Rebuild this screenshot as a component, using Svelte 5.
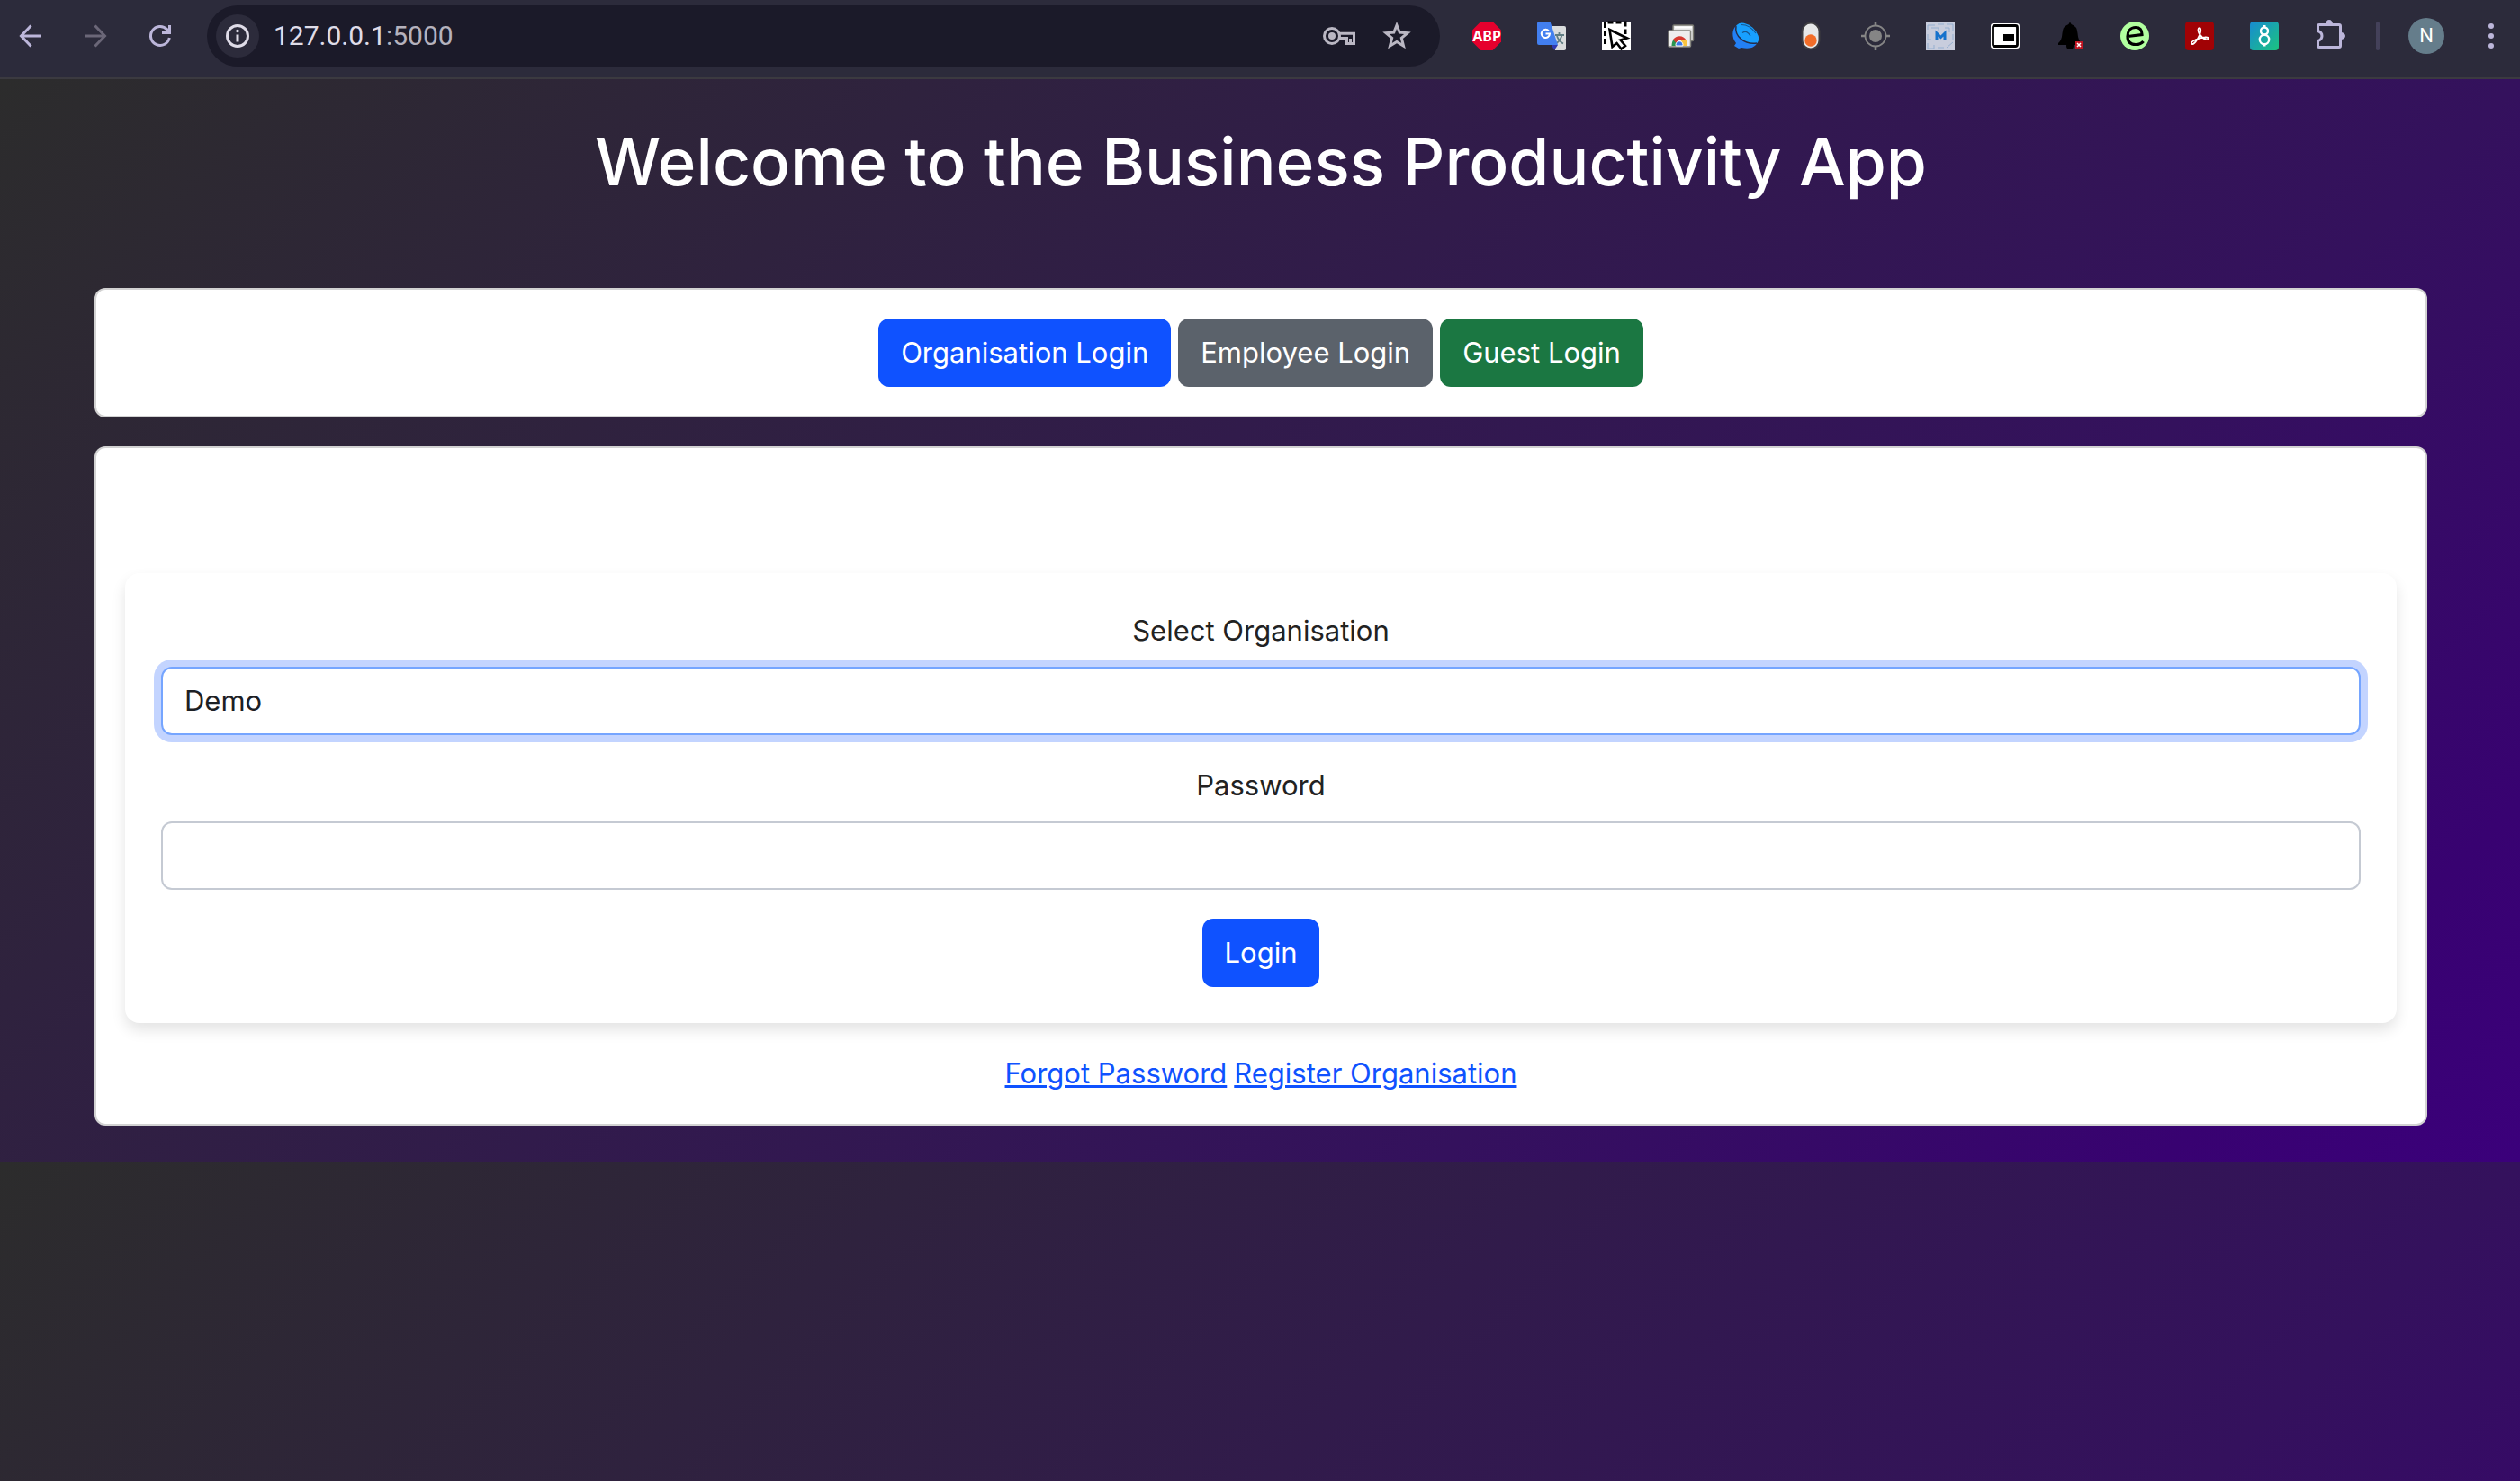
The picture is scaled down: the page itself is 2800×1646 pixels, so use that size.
<script>
  let organisation = $state('Demo');
  let password = $state('');
  const keepPage = (event) => event.preventDefault();
</script>

<header class="toolbar">
  <nav class="history" aria-label="History">
    <button class="tool" aria-label="Back">
      <svg viewBox="0 0 40 40"><path d="M32 20H10M20.500 8.500L9.500 20L20.500 31.500" class="line" /></svg>
    </button>
    <button class="tool faded" aria-label="Forward">
      <svg viewBox="0 0 40 40"><path d="M8 20H30M19.500 8.500L30.500 20L19.500 31.500" class="line" /></svg>
    </button>
    <button class="tool" aria-label="Reload">
      <svg viewBox="0 0 40 40"><path d="M30.300 22A10.500 10.500 0 1 1 27.500 12.600L31 16.500" class="line" /><path d="M30.500 8V16.500H22" class="line" /></svg>
    </button>
  </nav>
  <div class="omnibox">
    <button class="site" aria-label="Site information">
      <svg viewBox="0 0 40 40"><circle cx="20" cy="20" r="11.500" class="line" /><path d="M20 18.500V26.500" class="line" /><circle cx="20" cy="14.500" r="1.800" fill="currentColor" /></svg>
    </button>
    <span class="address">127.0.0.1<span class="port">:5000</span></span>
    <button class="tool pale" aria-label="Passwords">
      <svg viewBox="0 0 40 40"><circle cx="12" cy="20" r="8.500" class="line" /><circle cx="12" cy="20" r="4" fill="currentColor" /><path d="M19 17.300H36.500V28.500H28.500V22.500H20M32.500 23V28" class="line" /></svg>
    </button>
    <button class="tool pale" aria-label="Bookmark this page">
      <svg viewBox="0 0 40 40"><path d="M20 8L23.200 16L32 16.700L25.300 22.300L27.500 31L20 26.400L12.500 31L14.700 22.300L8 16.700L16.800 16Z" class="line" /></svg>
    </button>
  </div>
  <div class="extensions">
    <button class="tool" aria-label="Ad blocker">
      <svg viewBox="0 0 40 40"><path d="M13.400 4H26.600L36 13.400V26.600L26.600 36H13.400L4 26.600V13.400Z" fill="#e6002d" /><text x="20" y="26" class="abp">ABP</text></svg>
    </button>
    <button class="tool" aria-label="Translate">
      <svg viewBox="0 0 40 40"><path d="M20 9H34Q36 9 36 11V34Q36 36 34 36H24Z" fill="#dadcdd" /><path d="M20 30H27L23 36Z" fill="#3038b0" /><path d="M24 19H34M28.500 16V19M31.500 19Q30 25 25.500 28M26 20Q28 26 33 28.500" fill="none" stroke="#607d83" stroke-width="1.800" /><path d="M6 4H18.500L27 30H6Q4 30 4 28V6Q4 4 6 4Z" fill="#427ff0" /><path d="M17 14.500A4.600 4.600 0 1 0 18 17.500H13.500" fill="none" stroke="#fff" stroke-width="2" /></svg>
    </button>
    <button class="tool" aria-label="Area select">
      <svg viewBox="0 0 40 40"><path d="M4 4H36V36H4Z" fill="#fff" /><path d="M7.500 29V5H30V18" fill="none" stroke="#000" stroke-width="3" stroke-dasharray="6 3" /><path d="M12.500 13L32 22.500L24.500 24.500L30 31L25.500 34.500L20.500 28L15.500 32Z" fill="#fff" stroke="#000" stroke-width="2.600" /></svg>
    </button>
    <button class="tool" aria-label="Tabs">
      <svg viewBox="0 0 40 40"><rect x="11" y="8" width="22.500" height="17.500" rx="1" fill="#e6e6e6" stroke="#77776f" stroke-width="1.500" /><path d="M13 10.500H32" stroke="#fff" stroke-width="2" /><rect x="6" y="14" width="24.500" height="18" rx="1" fill="#eee" stroke="#85857f" stroke-width="1.500" /><path d="M9.500 31Q9.500 25 13 23L18 31Z" fill="#2a9450" /><path d="M11 24A8.600 8.600 0 0 1 25.500 24.500H18L14.500 28Z" fill="#d63a30" /><path d="M20 24.500H25.700Q27 27 26.800 31H19Z" fill="#f9c440" /><path d="M14.200 31A4 4 0 1 1 21.800 31Z" fill="#3b78e8" stroke="#fff" /></svg>
    </button>
    <button class="tool" aria-label="Planet">
      <svg viewBox="0 0 40 40"><path d="M10 8C4 12 4 22 9 28L7 31L12 34L15 33C24 35 31 33 33 26Z" fill="#2380f5" /><ellipse cx="21.500" cy="17.500" rx="15" ry="9" fill="#18a0ff" transform="rotate(42 21.500 17.500)" /><path d="M9 9C7 20 18 30 32 28" fill="none" stroke="#252b48" stroke-width="1.500" /><path d="M16 16.500Q21 13 25 20M14 7.500Q24 7 31 17" fill="none" stroke="#17568e" stroke-width="1.200" /></svg>
    </button>
    <button class="tool" aria-label="Toggle">
      <svg viewBox="0 0 40 40"><rect x="10.500" y="5.500" width="19" height="29" rx="9.500" fill="#e7e8e8" stroke="#3d3c40" stroke-width="2" /><circle cx="20" cy="25" r="6.700" fill="#f26d28" /></svg>
    </button>
    <button class="tool" aria-label="Locator">
      <svg viewBox="0 0 40 40"><g fill="none" stroke="#858585" stroke-width="1.800"><circle cx="20" cy="20" r="11.500" /><path d="M20 4V9M20 31V36M4 20H9M31 20H36" stroke-width="2.600" /></g><circle cx="20" cy="20" r="7" fill="#858585" /></svg>
    </button>
    <button class="tool" aria-label="Monitor">
      <svg viewBox="0 0 40 40"><path d="M4 4H36V36H4Z" fill="#c8cddd" /><path d="M6 13V8H14M17 7H24M27 7H34V15M34 18V25M6 18V24H10M6 28V34H13V30M17 33H24M27 33L34 27M10 11H18V14M25 11H30V16" fill="none" stroke="#95afd0" stroke-width="1" /><path d="M16 24.500V17L20.500 21.500L25 17V24.500" fill="none" stroke="#1672cc" stroke-width="3" /></svg>
    </button>
    <button class="tool" aria-label="Picture in picture">
      <svg viewBox="0 0 40 40"><rect x="4" y="6" width="32" height="28" rx="3" fill="#fff" /><rect x="6.500" y="8.500" width="27" height="23" rx="2" fill="#fff" stroke="#000" stroke-width="2.800" /><path d="M18 18H30V26H18Z" fill="#000" /></svg>
    </button>
    <button class="tool" aria-label="Notifications off">
      <svg viewBox="0 0 40 40"><path d="M18.500 7Q20 3 21.500 7Q28 9 28.500 17Q29 25 33 28V30H7V28Q11 25 11.500 17Q12 9 18.500 7Z" fill="#000" /><circle cx="20" cy="31" r="4" fill="#000" /><path d="M26 26H34V34H26Z" fill="#c01522" /><path d="M28 28L32 32M32 28L28 32" stroke="#fff" stroke-width="1.500" /></svg>
    </button>
    <button class="tool" aria-label="Evernote">
      <svg viewBox="0 0 40 40"><circle cx="20" cy="20" r="16" fill="#b1ff9f" /><path d="M12 20.500L28 18.500C28 13 25.500 10.500 21 10.500C15 10.500 12 15 12 20.500C12 27 16 29.500 21 29.500C25 29.500 28 28 29.500 26" fill="none" stroke="#000" stroke-width="3.200" /></svg>
    </button>
    <button class="tool" aria-label="PDF tools">
      <svg viewBox="0 0 40 40"><rect x="4" y="4" width="32" height="32" rx="4" fill="#a10205" /><path d="M19 11.500C22 10 21.500 15 20 19C18 24 13 31 11 28.500C10 26 19 22 26 21.500C31 21 31 25 27 24C22 22.500 17 15 19 11.500Z" fill="none" stroke="#fff" stroke-width="1.900" /></svg>
    </button>
    <button class="tool" aria-label="Link eight">
      <svg viewBox="0 0 40 40"><defs><linearGradient id="teal" x1="0" y1="0" x2="1" y2="1"><stop offset="0" stop-color="#188bd2" /><stop offset="1" stop-color="#1bc37f" /></linearGradient></defs><rect x="4" y="4" width="32" height="32" rx="4" fill="url(#teal)" /><g fill="none" stroke="#fff" stroke-width="2.400"><circle cx="20" cy="14.500" r="4" /><circle cx="20" cy="24" r="5.200" /><path d="M20 8V11M20 29V31.500" stroke-width="3" /></g></svg>
    </button>
    <button class="tool" aria-label="Extensions">
      <svg viewBox="0 0 40 40"><path d="M9 7.500H31Q32.500 7.500 32.500 9V31Q32.500 32.500 31 32.500H9Q7.500 32.500 7.500 31V25.500Q12 24 12 20Q12 16 7.500 14.500V9Q7.500 7.500 9 7.500Z" class="line" /><path d="M16 7A4 5 0 0 1 24 7ZM33 16A5 4 0 0 1 33 24Z" fill="currentColor" /></svg>
    </button>
  </div>
  <span class="divider"></span>
  <button class="avatar" aria-label="Profile N">N</button>
  <button class="tool menu" aria-label="Menu">
    <svg viewBox="0 0 40 40"><g fill="currentColor"><circle cx="20" cy="9" r="3" /><circle cx="20" cy="20" r="3" /><circle cx="20" cy="31" r="3" /></g></svg>
  </button>
</header>

<div class="canvas">
  <main class="page">
    <h1>Welcome to the Business Productivity App</h1>
    <section class="card choices" aria-label="Login type">
      <button class="btn blue">Organisation Login</button>
      <button class="btn grey">Employee Login</button>
      <button class="btn green">Guest Login</button>
    </section>
    <section class="card login">
      <form onsubmit={keepPage}>
        <label for="organisation">Select Organisation</label>
        <select id="organisation" class="active" bind:value={organisation}>
          <option>Demo</option>
        </select>
        <label for="password">Password</label>
        <input id="password" type="password" bind:value={password} />
        <button class="btn blue" type="submit">Login</button>
      </form>
      <p class="links">
        <a href="#forgot">Forgot Password</a>
        <a href="#register">Register Organisation</a>
      </p>
    </section>
  </main>
  <div class="rest"></div>
</div>

<style>
  :global(body) {
    background: #2c2c2c;
  }
  :global(#app) {
    --backdrop: linear-gradient(135deg, #2c2c2c, #34115d 70%, #380271 90%, #3b007b);
    display: flex;
    flex-direction: column;
    min-height: 100vh;
    font-family: Inter, 'Liberation Sans', sans-serif;
    font-size: 31px;
    line-height: 48px;
    color: #212529;
  }
  button {
    font: inherit;
    border: 0;
    cursor: pointer;
  }
  .toolbar {
    display: flex;
    align-items: center;
    box-sizing: border-box;
    padding: 6px 12px 12px 14px;
    background: #2c2b3b;
    border-bottom: 2px solid #3b3a40;
    color: #bcb6da;
  }
  svg {
    display: block;
    width: 40px;
    height: 40px;
  }
  .line {
    fill: none;
    stroke: currentColor;
    stroke-width: 3;
  }
  .tool {
    flex: none;
    padding: 0;
    background: none;
    color: inherit;
  }
  .tool.faded {
    color: #6b6778;
  }
  .tool.pale {
    color: #bab7c3;
  }
  .history {
    display: flex;
    gap: 32px;
    margin-right: 32px;
  }
  .omnibox {
    flex: 1;
    display: flex;
    align-items: center;
    gap: 24px;
    height: 68px;
    box-sizing: border-box;
    padding: 0 28px 0 10px;
    border-radius: 34px;
    background: #1b1a29;
    color: #dfdce8;
  }
  .site {
    display: grid;
    place-items: center;
    width: 48px;
    height: 48px;
    padding: 0;
    margin-right: -8px;
    border-radius: 50%;
    background: #2c2b3b;
    color: #dfdce8;
  }
  .address {
    flex: 1;
    font-family: Roboto, sans-serif;
    font-size: 30px;
  }
  .port {
    color: #b5b2bd;
  }
  .extensions {
    display: flex;
    gap: 32px;
    margin-left: 32px;
  }
  .abp {
    font: bold 16px 'Noto Sans', sans-serif;
    fill: #fff;
    text-anchor: middle;
  }
  .divider {
    width: 4px;
    height: 32px;
    margin: 0 32px;
    border-radius: 2px;
    background: #44415a;
  }
  .avatar {
    width: 40px;
    height: 40px;
    padding: 0;
    margin-right: 32px;
    border-radius: 50%;
    background: #657d8b;
    color: #fff;
    font-family: Roboto, sans-serif;
    font-size: 22px;
    line-height: 40px;
  }
  .canvas {
    flex: 1;
    display: flex;
    flex-direction: column;
    overflow: hidden;
  }
  .page {
    display: flex;
    flex-direction: column;
    gap: 32px;
    padding: 44px 103px 40px 105px;
    background: var(--backdrop);
  }
  /* The page background starts over below the content. */
  .rest {
    flex: 1 0 0;
    background: var(--backdrop) 0 0 / 100% 1203px;
  }
  h1 {
    margin: 0 0 60px;
    color: #fff;
    font-size: 73px;
    font-weight: 500;
    line-height: 96px;
    text-align: center;
  }
  .card {
    padding: 32px;
    border: 2px solid rgba(0, 0, 0, 0.176);
    border-radius: 12px;
    background: #fff;
    text-align: center;
  }
  .choices {
    display: flex;
    justify-content: center;
    gap: 8px;
  }
  .btn {
    padding: 14px 25px;
    border-radius: 12px;
    color: #fff;
  }
  .blue {
    background: #0f52ff;
  }
  .grey {
    background: #5b626b;
  }
  .green {
    background: #1b7742;
  }
  .login {
    padding-top: 139px;
  }
  form {
    display: flex;
    flex-direction: column;
    align-items: center;
    padding: 40px;
    border-radius: 16px;
    box-shadow: 0 8px 16px rgba(0, 0, 0, 0.11);
  }
  label {
    margin-bottom: 16px;
    color: #222;
  }
  select,
  input {
    appearance: none;
    width: 100%;
    height: 76px;
    box-sizing: border-box;
    padding: 12px 24px;
    margin: 0 0 32px;
    border: 2px solid #c5cad3;
    border-radius: 12px;
    outline: 0;
    background: #fff;
    color: #1c2024;
    font: inherit;
  }
  .active {
    border-color: #75a5ff;
    box-shadow: 0 0 0 8px #c3d4ff;
  }
  .links {
    display: flex;
    justify-content: center;
    gap: 8px;
    margin: 32px 0 0;
  }
  a {
    color: #0f52ff;
    text-decoration-thickness: 3px;
  }
</style>
